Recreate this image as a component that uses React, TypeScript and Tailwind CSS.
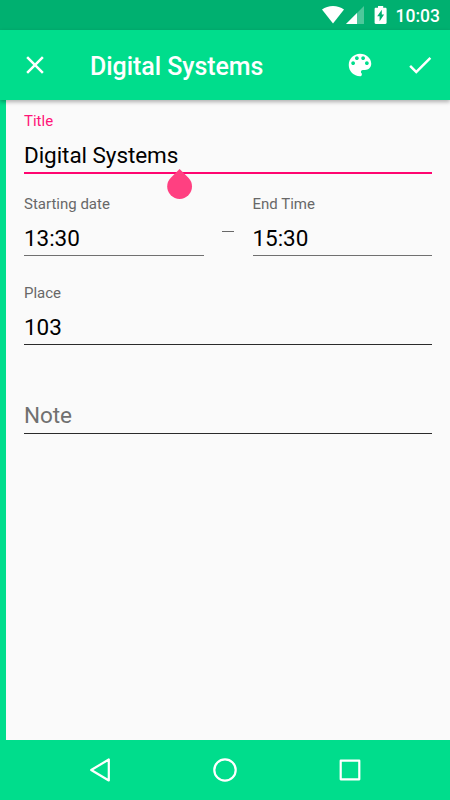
import type { ReactNode } from "react";
import clsx from "clsx";

const StatusBar = () => {
  return (
    <header className="flex h-[30px] shrink-0 items-center justify-end bg-[#00b070] pr-[10px] text-white">
      <svg className="h-[30px] w-[68px]" viewBox="320 0 68 30" fill="currentColor">
        <path d="M322 9.6C325 7.3 329 6 333 6s8 1.3 11 3.6L333 23.6z" />
        <path d="M364 6v18h-18z" opacity=".3" />
        <path d="M357 13v11h-11z" />
        <path
          fillRule="evenodd"
          d="M385.4 7.7h-2.2V6h-5.2v1.7h-2.2c-.7 0-1.2.5-1.2 1.2v13.9c0 .7.5 1.2 1.2 1.2h9.6c.7 0 1.2-.5 1.2-1.2V8.9c0-.7-.5-1.2-1.2-1.2zM379.6 21.2v-5h-2.4l4.6-6.5v4.9h2.3z"
        />
      </svg>
      <span className="ml-2 pt-0.5 text-[17.5px] leading-[30px] font-medium">10:03</span>
    </header>
  );
};

const Toolbar = () => {
  return (
    <div className="z-10 flex h-[70px] shrink-0 items-center bg-[#00dd8c] px-[15px] pl-5 text-white shadow-[0_2px_4px_rgba(0,0,0,0.3)]">
      <button aria-label="Close">
        <svg className="size-[30px]" viewBox="0 0 24 24" fill="currentColor">
          <path d="M19 6.41L17.59 5 12 10.59 6.41 5 5 6.41 10.59 12 5 17.59 6.41 19 12 13.41 17.59 19 19 17.59 13.41 12z" />
        </svg>
      </button>
      <h1 className="ml-10 grow pt-1 text-[25px] leading-[30px] font-medium tracking-[-0.06px]">Digital Systems</h1>
      <div className="flex gap-[30px]">
        <button aria-label="Color">
          <svg className="size-[30px]" viewBox="0 0 24 24" fill="currentColor">
            <path d="M12 3c-4.97 0-9 4.03-9 9s4.03 9 9 9c.83 0 1.5-.67 1.5-1.5 0-.39-.15-.74-.39-1.01-.23-.26-.38-.61-.38-.99 0-.83.67-1.5 1.5-1.5H16c2.76 0 5-2.24 5-5 0-4.42-4.03-8-9-8zm-5.5 9c-.83 0-1.5-.67-1.5-1.5S5.67 9 6.5 9 8 9.67 8 10.5 7.33 12 6.5 12zm3-4C8.67 8 8 7.33 8 6.5S8.67 5 9.5 5s1.5.67 1.5 1.5S10.33 8 9.5 8zm5 0c-.83 0-1.5-.67-1.5-1.5S13.67 5 14.5 5s1.5.67 1.5 1.5S15.33 8 14.5 8zm3 4c-.83 0-1.5-.67-1.5-1.5S16.67 9 17.5 9s1.5.67 1.5 1.5-.67 1.5-1.5 1.5z" />
          </svg>
        </button>
        <button aria-label="Save">
          <svg className="size-[30px]" viewBox="0 0 24 24" fill="currentColor">
            <path d="M9 16.2L4.8 12l-1.4 1.4L9 19 21 7l-1.4-1.4L9 16.2z" />
          </svg>
        </button>
      </div>
    </div>
  );
};

type FieldProps = {
  label: string;
  value?: string;
  active?: boolean;
  line?: string;
  className?: string;
  children?: ReactNode;
};

const Field = ({ label, value, active, line = "bg-[#2b2b2b]", className, children }: FieldProps) => {
  return (
    <div className={clsx("relative", className)}>
      <div className={clsx("h-[18px] text-[15px] leading-[18px]", active ? "text-[#ff1478]" : "text-[#686868]")}>
        {value && label}
      </div>
      {/* an empty field shows its label as the hint, one pixel higher */}
      <div
        className={clsx(
          "h-[28px] text-[22.5px] leading-[28px] tracking-[-0.06px]",
          value ? "mt-[11px] mb-[3px] text-black" : "mt-[10px] mb-1 text-[#707070]",
        )}
      >
        {value || label}
      </div>
      <div className={active ? "h-[2px] bg-[#ff0570]" : clsx("h-px", line)} />
      {children}
    </div>
  );
};

const CursorHandle = () => {
  return (
    <svg className="absolute top-[57px] left-[143px] h-[31px] w-[26px]" viewBox="0 0 26 31" fill="#ff4081">
      <path d="M12.6 0l8.8 8.8a12.4 12.4 0 1 1-17.6 0z" />
    </svg>
  );
};

const NavBar = () => {
  return (
    <nav className="flex h-[60px] shrink-0 items-center justify-center gap-[95px] bg-[#00dd8c] text-white">
      <svg className="size-[30px]" viewBox="0 0 30 30" fill="none" stroke="currentColor" strokeWidth="2.2" strokeLinejoin="round">
        <path d="M23.8 4.5v21L6.2 15z" />
      </svg>
      <svg className="size-[30px]" viewBox="0 0 30 30" fill="none" stroke="currentColor" strokeWidth="2.2">
        <circle cx="15" cy="15" r="10.7" />
      </svg>
      <svg className="size-[30px]" viewBox="0 0 30 30" fill="none" stroke="currentColor" strokeWidth="2.2" strokeLinejoin="round">
        <path d="M5.7 5.7h18.6v18.6h-18.6z" />
      </svg>
    </nav>
  );
};

export default function App() {
  return (
    <div className="flex h-[800px] w-[450px] flex-col overflow-hidden bg-[#fafafa] font-[Roboto,sans-serif]">
      <StatusBar />
      <Toolbar />
      <main className="grow border-l-6 border-[#00dd8c] pt-3 pr-[18px] pl-[18px]">
        <Field label="Title" value="Digital Systems" active>
          <CursorHandle />
        </Field>
        <div className="mt-[21px] flex justify-between">
          <Field label="Starting date" value="13:30" line="bg-[#707070]" className="w-[179.5px]" />
          <div className="mt-9 h-px w-3 bg-[#686868]" />
          <Field label="End Time" value="15:30" line="bg-[#707070]" className="w-[179.5px]" />
        </div>
        <Field label="Place" value="103" className="mt-[28px]" />
        <Field label="Note" className="mt-[28px]" />
      </main>
      <NavBar />
    </div>
  );
}
